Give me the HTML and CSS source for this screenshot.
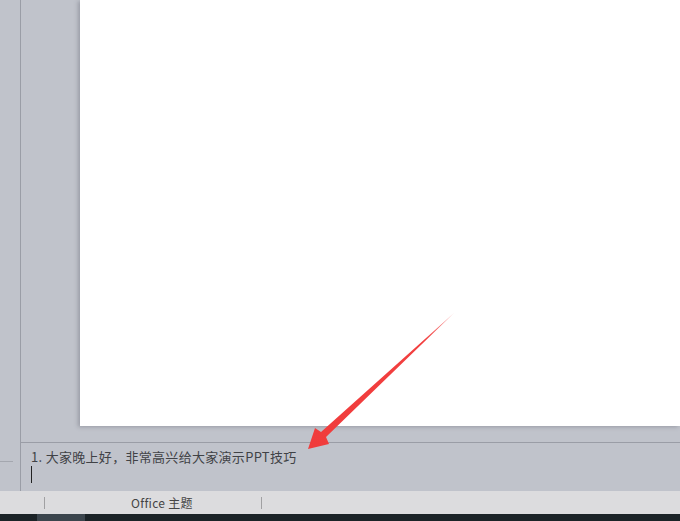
FILE: index.html
```html
<!DOCTYPE html>
<html>
<head>
<meta charset="utf-8">
<link rel="stylesheet" href="styles.css">
</head>
<body>
<div class="app">
  <div class="work">
    <div class="thumbs"><div class="thumb-line"></div></div>
    <div class="main">
      <div class="editor">
        <div class="slide"></div>
      </div>
      <div class="notes">
        <div class="note-text">1. 大家晚上好，非常高兴给大家演示PPT技巧</div>
        <div class="caret"></div>
      </div>
    </div>
  </div>
  <div class="status">
    <div class="cell first"></div>
    <div class="cell theme">Office 主题</div>
  </div>
  <div class="taskbar"><div class="task-active"></div></div>
  <svg class="arrow" width="680" height="521" viewBox="0 0 680 521">
    <defs>
      <linearGradient id="ag" x1="308" y1="449" x2="454" y2="313" gradientUnits="userSpaceOnUse">
        <stop offset="0" stop-color="#f03c3c"/>
        <stop offset="0.8" stop-color="#f23f3f"/>
        <stop offset="1" stop-color="#f8a0a0"/>
      </linearGradient>
    </defs>
    <polygon fill="url(#ag)" points="308,449 315,428 321,432 454,313 326,437 329,444"/>
  </svg>
</div>
</body>
</html>
```
FILE: styles.css
```css
html, body {
  margin: 0;
  padding: 0;
}
body {
  font-family: "Noto Sans CJK SC", "Noto Sans", sans-serif;
  background: #c0c3cb;
}
.app {
  position: relative;
  width: 680px;
  height: 521px;
  display: flex;
  flex-direction: column;
  overflow: hidden;
  background: #c0c3cb;
}
.work {
  display: flex;
  height: 491px;
}
.thumbs {
  width: 20px;
  border-right: 1px solid #9a9da6;
  flex: none;
}
.thumb-line {
  margin-top: 461px;
  width: 13px;
  height: 1px;
  background: #a4a7af;
}
.main {
  flex: 1;
  display: flex;
  flex-direction: column;
}
.editor {
  border-bottom: 1px solid #9a9da6;
  padding-left: 59px;
  box-sizing: border-box;
  height: 443px;
}
.slide {
  height: 426px;
  background: #ffffff;
  box-shadow: -2px 1px 4px rgba(80, 84, 96, 0.35);
}
.notes {
  flex: 1;
  padding: 5px 0 0 10px;
}
.note-text {
  font-size: 13px;
  line-height: 17px;
  letter-spacing: 0.3px;
  color: #404246;
  white-space: nowrap;
}
.caret {
  margin-top: 1px;
  width: 1px;
  height: 17px;
  background: #222;
}
.status {
  height: 23px;
  background: #dcdcde;
  display: flex;
  align-items: center;
  flex: none;
}
.cell {
  height: 12px;
  border-right: 1px solid #a0a0a2;
  font-size: 12px;
  line-height: 12px;
  letter-spacing: 0.3px;
  color: #444;
  white-space: nowrap;
}
.first {
  width: 44px;
}
.theme {
  width: 130px;
  padding-left: 86px;
}
.taskbar {
  height: 7px;
  background: #1b2327;
  flex: none;
  padding-left: 37px;
}
.task-active {
  width: 48px;
  height: 7px;
  background: #3b454d;
}
.arrow {
  position: absolute;
  left: 0;
  top: 0;
  pointer-events: none;
}
```
